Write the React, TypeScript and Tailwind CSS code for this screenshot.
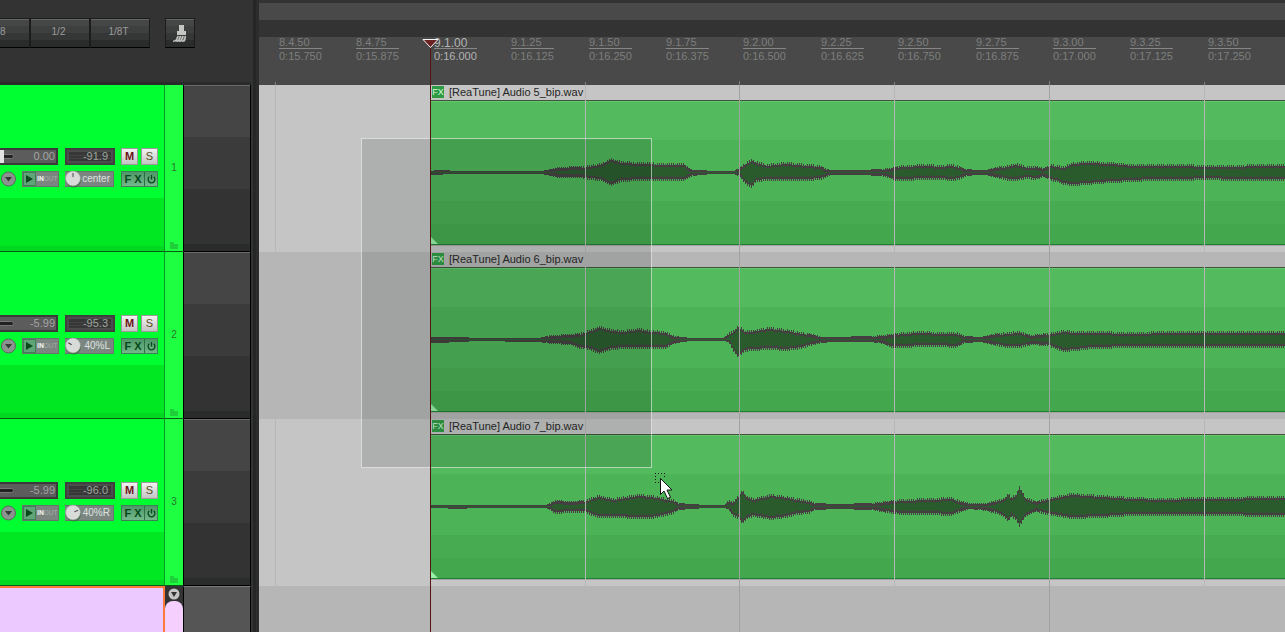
import { useState } from 'react'
import clsx from 'clsx'

type EnvelopePoint = [x: number, up: number, down: number]

interface Track {
  id: number
  file: string
  volume: string
  fader: number
  peak: string
  pan: string
  panAngle: number
  envelope: EnvelopePoint[]
}

const tracks: Track[] = [
  {
    id: 1,
    file: '[ReaTune] Audio 5_bip.wav',
    volume: '0.00',
    fader: 82,
    peak: '-91.9',
    pan: 'center',
    panAngle: 0,
    envelope: [
      [0, 1, 2], [5, 2, 2], [17, 2, 1], [20, 1, 1], [110, 1, 1], [116, 2, 2], [126, 5, 5], [150, 6, 5],
      [158, 7, 7], [170, 9, 8], [180, 14, 13], [190, 11, 9], [209, 10, 8], [235, 9, 8], [253, 9, 8],
      [257, 5, 5], [261, 2, 3], [270, 2, 2], [280, 1, 1], [303, 1, 1], [307, 4, 3], [315, 10, 12],
      [320, 13, 15], [325, 11, 9], [335, 8, 8], [355, 10, 8], [375, 8, 8], [389, 7, 7], [395, 3, 4],
      [400, 2, 2], [430, 2, 2], [450, 3, 3], [458, 4, 5], [463, 5, 8], [470, 7, 8], [495, 8, 7],
      [510, 7, 7], [520, 8, 8], [528, 6, 7], [535, 3, 3], [545, 2, 2], [555, 2, 2], [560, 4, 4],
      [570, 6, 6], [577, 7, 8], [585, 9, 8], [595, 6, 6], [604, 6, 7], [612, 4, 4], [619, 8, 8],
      [625, 7, 9], [632, 6, 12], [642, 10, 13], [655, 11, 12], [680, 10, 10], [700, 8, 9], [720, 8, 8],
      [745, 8, 8], [780, 7, 7], [800, 7, 8], [830, 8, 8], [855, 8, 8],
    ],
  },
  {
    id: 2,
    file: '[ReaTune] Audio 6_bip.wav',
    volume: '-5.99',
    fader: 40,
    peak: '-95.3',
    pan: '40%L',
    panAngle: -60,
    envelope: [
      [0, 2, 3], [35, 2, 2], [40, 1, 1], [108, 1, 2], [120, 4, 4], [140, 5, 5], [148, 6, 9], [157, 9, 10],
      [168, 13, 14], [180, 10, 10], [192, 9, 9], [207, 11, 9], [220, 9, 9], [235, 8, 9], [240, 4, 5],
      [250, 2, 2], [260, 1, 1], [292, 1, 1], [297, 6, 2], [302, 9, 12], [307, 14, 18], [313, 9, 12],
      [320, 9, 11], [338, 12, 10], [355, 10, 11], [370, 7, 9], [382, 5, 5], [390, 2, 3], [400, 2, 2],
      [440, 3, 2], [452, 4, 4], [460, 5, 8], [472, 7, 8], [490, 8, 7], [508, 7, 7], [525, 7, 8],
      [533, 3, 3], [550, 2, 2], [560, 5, 5], [575, 7, 8], [588, 8, 8], [600, 4, 5], [615, 6, 6],
      [632, 9, 12], [645, 8, 11], [660, 8, 9], [700, 7, 8], [740, 8, 8], [800, 8, 8], [855, 8, 8],
    ],
  },
  {
    id: 3,
    file: '[ReaTune] Audio 7_bip.wav',
    volume: '-5.99',
    fader: 40,
    peak: '-96.0',
    pan: '40%R',
    panAngle: 65,
    envelope: [
      [0, 1, 1], [33, 1, 2], [38, 1, 1], [115, 1, 1], [119, 3, 3], [123, 6, 7], [140, 5, 6], [153, 6, 6],
      [167, 11, 11], [182, 8, 11], [207, 12, 12], [220, 11, 12], [235, 8, 9], [242, 7, 7], [247, 3, 3],
      [260, 2, 2], [275, 1, 1], [293, 1, 1], [297, 6, 2], [301, 4, 9], [307, 11, 12], [311, 16, 17],
      [316, 10, 12], [322, 8, 10], [340, 12, 13], [355, 10, 11], [365, 8, 8], [378, 6, 7], [383, 3, 3],
      [405, 2, 2], [440, 3, 3], [455, 5, 6], [470, 7, 8], [500, 8, 8], [520, 9, 9], [530, 5, 5],
      [538, 3, 2], [555, 3, 4], [565, 6, 7], [572, 8, 10], [577, 13, 15], [580, 9, 10], [585, 13, 14],
      [588, 20, 20], [594, 9, 10], [605, 5, 5], [615, 8, 8], [640, 13, 12], [670, 11, 11], [700, 9, 9],
      [730, 8, 9], [770, 9, 9], [855, 10, 10],
    ],
  },
]

const rulerMarks = [
  { x: 20, beat: '8.4.50', time: '0:15.750' },
  { x: 97, beat: '8.4.75', time: '0:15.875' },
  { x: 175, beat: '9.1.00', time: '0:16.000' },
  { x: 252, beat: '9.1.25', time: '0:16.125' },
  { x: 330, beat: '9.1.50', time: '0:16.250' },
  { x: 407, beat: '9.1.75', time: '0:16.375' },
  { x: 484, beat: '9.2.00', time: '0:16.500' },
  { x: 562, beat: '9.2.25', time: '0:16.625' },
  { x: 639, beat: '9.2.50', time: '0:16.750' },
  { x: 717, beat: '9.2.75', time: '0:16.875' },
  { x: 794, beat: '9.3.00', time: '0:17.000' },
  { x: 871, beat: '9.3.25', time: '0:17.125' },
  { x: 949, beat: '9.3.50', time: '0:17.250' },
]

const gridLines = [
  { x: 16, beat: false },
  { x: 326, beat: false },
  { x: 480, beat: true },
  { x: 635, beat: false },
  { x: 790, beat: true },
  { x: 945, beat: false },
]

const WAVE_CENTER = 71
const WAVE_WIDTH = 2400

function levelAt(envelope: EnvelopePoint[], x: number): [number, number] {
  const next = envelope.findIndex((point) => point[0] > x)
  if (next < 0) {
    const last = envelope[envelope.length - 1]
    return [last[1], last[2]]
  }
  const [x0, up0, down0] = envelope[next - 1]
  const [x1, up1, down1] = envelope[next]
  const t = (x - x0) / (x1 - x0)
  return [up0 + (up1 - up0) * t, down0 + (down1 - down0) * t]
}

// one vertical bar per pixel: every other bar is a short one, which gives the comb edge
function wavePaths(envelope: EnvelopePoint[]) {
  let outer = ''
  let inner = ''
  for (let x = 0; x < WAVE_WIDTH; x++) {
    const [up, down] = levelAt(envelope, x)
    const dipUp = x % 2 ? Math.min(2, Math.floor(up / 3)) : 0
    const dipDown = x % 2 ? Math.min(2, Math.floor(down / 3)) : 0
    const wobble = up > 6 && x % 10 === 4 ? 1 : 0
    const top = Math.round(up) - dipUp - wobble
    const bottom = Math.round(down) - dipDown + 1
    outer += `M${x} ${WAVE_CENTER - top}h1v${top + bottom}h-1z`
    const innerTop = Math.max(0, Math.round(up) - 4 - wobble)
    const innerBottom = Math.max(1, Math.round(down) - 3 - (x % 5 ? 0 : 1))
    inner += `M${x} ${WAVE_CENTER - innerTop}h1v${innerTop + innerBottom}h-1z`
  }
  return { outer, inner }
}

function Waveform({ envelope }: { envelope: EnvelopePoint[] }) {
  const { outer, inner } = wavePaths(envelope)
  return (
    <svg width={WAVE_WIDTH} height="143" className="block max-w-none" shapeRendering="crispEdges" aria-hidden="true">
      <path d={outer} fill="#453f41" />
      <path d={inner} fill="#2a5b2c" />
    </svg>
  )
}

function ToolButton({ children, className, label }: { children: React.ReactNode; className?: string; label?: string }) {
  return (
    <button
      aria-label={label}
      className={clsx(
        'flex h-[30px] shrink-0 items-center border border-t-[#1c1c1c] border-r-[#1c1c1c] border-b-black border-l-[#1c1c1c] bg-[linear-gradient(#454646_0_7px,#3e3f3f_7px_14px,#353636_14px_21px,#2a2c2c_21px)] pb-[3px] text-[10px] text-[#9c9c9c] shadow-[inset_0_1px_0_#666]',
        className,
      )}
    >
      {children}
    </button>
  )
}

function Toolbar() {
  return (
    <div className="flex h-[85px] items-start border-b-3 border-[#292a2a] pt-[18px]">
      <ToolButton className="w-[30px] justify-start border-l-0" label="1/8">8</ToolButton>
      <ToolButton className="w-[60px] justify-center pr-[3px]">1/2</ToolButton>
      <ToolButton className="w-[60px] justify-center pr-[3px]">1/8T</ToolButton>
      <ToolButton className="ml-[15px] w-[30px] justify-center" label="Clean up">
        <svg width="14" height="17" viewBox="0 0 14 17" className="mt-[4px]" aria-hidden="true">
          <path d="M6 0h5v6h2v4H4V6h2z" fill="#c4c6c4" />
          <path d="M4 11h9v3l-1 3H2v-2l1-1z" fill="#777977" />
          <path
            d="M5 11l-1.500 4L0 16.500M7.500 11L6 15l-2.500 1.500M10 11l-1.500 4L6 16.500M12.500 11l-1 4L9 16.500"
            fill="none"
            stroke="#c4c6c4"
            strokeWidth="1.300"
          />
        </svg>
      </ToolButton>
    </div>
  )
}

function Knob({ angle }: { angle: number }) {
  return (
    <svg width="17" height="18" viewBox="0 0 17 18" className="shrink-0" aria-hidden="true">
      <circle cx="8.500" cy="10" r="7.500" fill="#2c6b35" opacity=".7" />
      <circle cx="8" cy="8.500" r="7.500" fill="#d9dbd9" stroke="#8d918d" strokeWidth=".6" />
      <path d="M8 7V3" stroke="#444" strokeWidth="1" transform={`rotate(${angle} 8 8.500)`} />
    </svg>
  )
}

function TrackControls({ track }: { track: Track }) {
  const [fader, setFader] = useState(track.fader)
  const [muted, setMuted] = useState(false)
  const [solo, setSolo] = useState(false)

  return (
    <div className="flex h-full w-[165px] shrink-0 flex-col gap-[5px] overflow-hidden border-r border-b border-r-[#0a9c22] border-b-[#0a5a18] bg-[linear-gradient(#00ff30_0_113px,#00e822_113px_161px,#00d91f_161px)] pt-[63px]">
      <div className="flex h-[18px] items-start">
        <div className="flex h-[17px] w-[58px] items-center justify-between overflow-hidden border-2 border-l-0 border-[#3a3a3a] bg-[#5b5c5b] pr-px">
          <input
            type="range"
            aria-label={`Track ${track.id} volume`}
            value={fader}
            onChange={(e) => setFader(Number(e.target.value))}
            className="-ml-[46px] h-[5px] w-[60px] shrink-0 appearance-none rounded-sm border border-[#777] bg-[#222] [&::-webkit-slider-thumb]:h-[13px] [&::-webkit-slider-thumb]:w-[10px] [&::-webkit-slider-thumb]:appearance-none [&::-webkit-slider-thumb]:bg-[#e4e4e4]"
          />
          <span className="text-[11px] leading-[13px] text-[#a4a4a4]">{track.volume}</span>
        </div>
        <div className="ml-[7px] flex h-[17px] w-[50px] items-center border-2 border-[#3f3f3f] bg-[#4c4d4c] px-[2px]">
          <span className="w-full bg-[linear-gradient(#363736_0_3px,#444_3px_4px,#363736_4px_6px,#444_6px_7px,#363736_7px)] pr-[3px] text-right text-[11px] leading-[9px] text-[#9aa39a]">
            {track.peak}
          </span>
        </div>
        <button
          aria-pressed={muted}
          onClick={() => setMuted(!muted)}
          className="ml-[6px] h-[17px] w-[17px] border border-[#9a9a9a] bg-linear-to-b from-[#f2f2f2] to-[#c4c4c4] text-[11px] leading-[15px] font-bold text-[#6b1418]"
        >
          M
        </button>
        <button
          aria-pressed={solo}
          onClick={() => setSolo(!solo)}
          className="ml-[3px] h-[17px] w-[17px] border border-[#9a9a9a] bg-linear-to-b from-[#f2f2f2] to-[#c4c4c4] text-[11px] leading-[15px] text-[#55501a]"
        >
          S
        </button>
      </div>

      <div className="flex h-[18px] items-start">
        <button aria-label="Envelope menu" className="ml-px">
          <svg width="16" height="17" viewBox="0 0 16 17">
            <circle cx="7.500" cy="8" r="7" fill="#8a938e" stroke="#59665e" />
            <path d="M4 6h7l-3.500 4.500z" fill="#333c37" />
          </svg>
        </button>
        <button className="ml-[5px] flex h-[16px] w-[37px] items-center border border-[#66756c] bg-[#7b8681] font-[Roboto,sans-serif] text-[7px] leading-[14px]">
          <span className="flex h-full w-[13px] shrink-0 items-center justify-center border border-[#3f7f56] bg-[#5fa578]">
            <svg width="7" height="8" viewBox="0 0 7 8" aria-hidden="true">
              <path d="M0 0l7 4-7 4z" fill="#0c4a1c" />
            </svg>
          </span>
          <span className="pl-px font-bold text-[#eceeec]">IN</span>
          <span className="text-[#a3aca6]">OUT</span>
        </button>
        <button
          aria-label={`Pan ${track.pan}`}
          className="ml-[6px] flex h-[16px] w-[49px] items-center justify-between border border-l-0 border-[#66756c] bg-[#7b8681] pr-[3px]"
        >
          <Knob angle={track.panAngle} />
          <span className="text-[10px] leading-[14px] text-[#dfe3e0]">{track.pan}</span>
        </button>
        <div className="ml-[7px] flex h-[16px] w-[37px] border border-[#3f7f56] bg-linear-to-b from-[#4f9668] to-[#72b88a] text-[#07491a]">
          <button className="flex-1 border-r border-[#2f6f44] text-center text-[11px] leading-[13px] font-bold">F X</button>
          <button aria-label="Bypass effects" className="flex w-[12px] items-center justify-center">
            <svg width="9" height="9" viewBox="0 0 9 9" fill="none" stroke="currentColor" strokeWidth="1.300">
              <path d="M2.300 1.800a3.400 3.400 0 1 0 4.400 0M4.500 0v4.500" />
            </svg>
          </button>
        </div>
      </div>
    </div>
  )
}

function TrackRow({ track }: { track: Track }) {
  return (
    <div className="flex h-[167px] shrink-0">
      <TrackControls track={track} />
      <div className="flex w-[18px] flex-col items-center border-b border-[#0a5a18] bg-[#1dff40] pt-[76px]">
        <span className="text-[10px] leading-[14px] text-[#27752f]">{track.id}</span>
        <svg width="8" height="7" viewBox="0 0 8 7" className="mt-auto mb-[2px]" aria-hidden="true">
          <path d="M0 0h4v2h4v5H0z" fill="#1fcf3a" />
        </svg>
      </div>
      <div className="flex-1 border border-t-0 border-black bg-[linear-gradient(#6b6b6b_0_1px,#454545_1px_52px,#3b3b3b_52px_104px,#333_104px_159px,#2a2c2c_159px)]" />
    </div>
  )
}

function MasterRow() {
  return (
    <div className="flex flex-1">
      <div className="w-[165px] shrink-0 border-t-2 border-r-2 border-[#fb7a3a] bg-[#ecc9ff]" />
      <div className="flex w-[18px] flex-col items-center bg-[#333]">
        <button aria-label="Collapse track" className="pt-[2px]">
          <svg width="12" height="12" viewBox="0 0 12 12">
            <circle cx="6" cy="6" r="5.500" fill="#c4c4c4" />
            <path d="M3 4h6L6 9z" fill="#333" />
          </svg>
        </button>
        <div className="mt-px w-full flex-1 rounded-t-[8px] bg-[#f5d0ff]" />
      </div>
      <div className="flex-1 border-x border-t border-x-black border-t-[#7c7c7c] bg-[#555]" />
    </div>
  )
}

function Ruler() {
  return (
    <div className="flex h-[48px] shrink-0 overflow-hidden bg-[#494949] pl-5">
      {rulerMarks.map((mark, i) => {
        const current = mark.beat === '9.1.00'
        const next = rulerMarks[i + 1]
        return (
          <div
            key={mark.beat}
            className={clsx('shrink-0', current ? 'text-[#b4b4b4]' : 'text-[#7d7f7d]')}
            style={{ width: next ? next.x - mark.x : 77 }}
          >
            <div
              className={clsx(
                'h-[12px] w-[43px] border-b border-[#868686]',
                current ? 'text-[12px] leading-[12px]' : 'text-[11px] leading-[10px]',
              )}
            >
              {mark.beat}
            </div>
            <div className="text-[11px] leading-[14px]">{mark.time}</div>
          </div>
        )
      })}
    </div>
  )
}

function Lane({ track, even }: { track: Track; even: boolean }) {
  return (
    <div className={clsx('h-[167px] shrink-0 overflow-hidden pl-[172px]', even ? 'bg-[#b5b6b5]' : 'bg-[#c4c5c4]')}>
      <div className="flex h-[15px] items-start gap-[5px] pl-px text-[11px] leading-[14px] text-[#262626]">
        <span className="mt-px h-[12px] w-[12px] bg-[#2f9c45] text-center text-[9px] leading-[12px] text-[#d6f7db]">
          FX
        </span>
        {track.file}
      </div>
      <div className="relative h-[145px] overflow-hidden border-t border-b border-t-[#41533f] border-b-[#1f7f2f] bg-[linear-gradient(#63c96c_0_1px,#53ba5d_1px_39px,#4cb357_39px_100px,#47ac51_100px_123px,#43a84d_123px)]">
        <Waveform envelope={track.envelope} />
        <svg width="7" height="7" viewBox="0 0 7 7" className="absolute bottom-0 left-0" aria-hidden="true">
          <path d="M0 0l7 7H0z" fill="#98f0a6" />
        </svg>
      </div>
      <div className="h-px bg-[#a3a4a3]" />
    </div>
  )
}

function MousePointer() {
  return (
    <svg width="20" height="30" viewBox="0 0 20 30" className="absolute top-[473px] left-[396px]" aria-hidden="true">
      <path d="M0 .5h10M0 9.500h6M.5 0v10M9.500 0v5" stroke="#111" strokeDasharray="1 2" fill="none" shapeRendering="crispEdges" />
      <path d="M5.500 5.500v16l3.500-3.500 3.500 7.500 3-1.200-3.500-7.300h5z" fill="#fff" stroke="#111" />
    </svg>
  )
}

function Arrange() {
  return (
    <main className="relative flex min-w-0 flex-1 flex-col overflow-hidden">
      <div className="mt-[3px] h-[17px] shrink-0 bg-[#494949]" />
      <div className="h-[17px] shrink-0" />
      <Ruler />
      {tracks.map((track, i) => (
        <Lane key={track.id} track={track} even={i % 2 === 1} />
      ))}
      <div className="flex-1 bg-[#b5b6b5]" />

      {gridLines.map((line) => (
        <div
          key={line.x}
          className={clsx(
            'absolute bottom-0 w-px',
            line.beat
              ? 'top-[81px] bg-[linear-gradient(#7d7f7d_0_4px,#a0a2a0_4px)]'
              : 'top-[82px] bg-[linear-gradient(#7d7f7d_0_3px,#b5b6b5_3px)]',
          )}
          style={{ left: line.x }}
        />
      ))}

      {/* marquee selection */}
      <div className="absolute top-[138px] left-[102px] h-[330px] w-[291px] border border-white/55 bg-[#10161c]/12" />

      {/* edit cursor */}
      <div className="absolute top-[45px] bottom-0 left-[171px] w-px bg-[#541414]" />
      <svg width="17" height="10" viewBox="0 0 17 10" className="absolute top-[39px] left-[163px]" aria-hidden="true">
        <path d="M1 .5h15L8.500 8.500z" fill="#6b2222" stroke="#f4f4f4" />
      </svg>
      <MousePointer />
    </main>
  )
}

export default function App() {
  return (
    <div className="flex h-screen overflow-hidden bg-[#333] font-['Liberation_Sans',Arial,sans-serif]">
      <aside className="flex w-[251px] shrink-0 flex-col">
        <Toolbar />
        {tracks.map((track) => (
          <TrackRow key={track.id} track={track} />
        ))}
        <MasterRow />
      </aside>
      <div className="w-[8px] shrink-0 border-r-3 border-l-2 border-r-[#2c2c2c] border-l-[#333] bg-[#252727]" />
      <Arrange />
    </div>
  )
}
